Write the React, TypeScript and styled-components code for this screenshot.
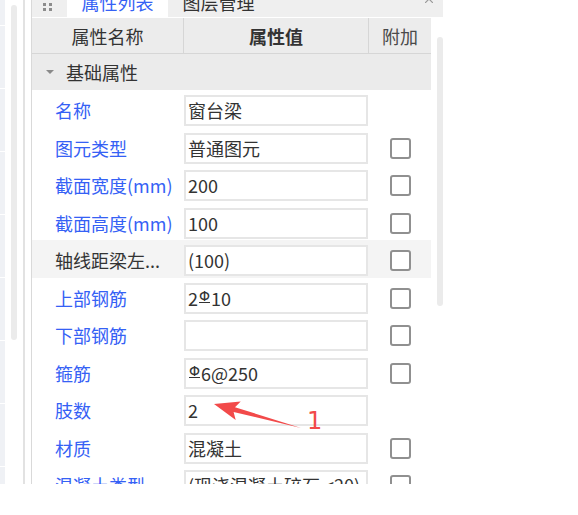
import React from 'react';
import styled, { createGlobalStyle } from 'styled-components';

const GlobalStyle = createGlobalStyle`
  html, body {
    margin: 0;
    padding: 0;
    background: #fff;
  }
  body {
    font-family: "Noto Sans CJK SC", "Noto Sans", sans-serif;
  }
`;

type Row = {
  label: string;
  value: React.ReactNode;
  check?: boolean;
  plain?: boolean;
};

const Rebar = () => <RebarMark>Φ</RebarMark>;

const rows: Row[] = [
  { label: '名称', value: '窗台梁' },
  { label: '图元类型', value: '普通图元', check: true },
  { label: '截面宽度(mm)', value: '200', check: true },
  { label: '截面高度(mm)', value: '100', check: true },
  { label: '轴线距梁左...', value: '(100)', check: true, plain: true },
  {
    label: '上部钢筋',
    value: (
      <>
        2<Rebar />10
      </>
    ),
    check: true,
  },
  { label: '下部钢筋', value: '', check: true },
  {
    label: '箍筋',
    value: (
      <>
        <Rebar />6@250
      </>
    ),
    check: true,
  },
  { label: '肢数', value: '2' },
  { label: '材质', value: '混凝土', check: true },
  { label: '混凝土类型', value: '(现浇混凝土碎石 <20)', check: true },
];

export default function App() {
  return (
    <Page>
      <GlobalStyle />
      <Side>
        <NavStrip>
          {Array.from({ length: 9 }).map((_, i) => (
            <NavItem key={i} />
          ))}
        </NavStrip>
        <SideScroll>
          <Thumb $h={335} />
        </SideScroll>
        <SideEdge />
      </Side>

      <Panel>
        <TabBar>
          <Grip>
            <svg width="10" height="10" viewBox="0 0 10 10">
              <rect x="0" y="0" width="3" height="3" fill="#8c8c8c" />
              <rect x="6" y="0" width="3" height="3" fill="#8c8c8c" />
              <rect x="0" y="5" width="3" height="3" fill="#8c8c8c" />
              <rect x="6" y="5" width="3" height="3" fill="#8c8c8c" />
            </svg>
          </Grip>
          <Tab $active>
            <TabText>属性列表</TabText>
          </Tab>
          <Tab>
            <TabText>图层管理</TabText>
          </Tab>
          <Spacer />
          <Close>
            <svg width="8" height="8" viewBox="0 0 8 8">
              <path d="M0 0 L8 8 M8 0 L0 8" stroke="#9a9a9a" strokeWidth="1.2" />
            </svg>
          </Close>
        </TabBar>

        <Body>
          <Table>
            <HeadRow>
              <HeadCell>属性名称</HeadCell>
              <HeadCell $bold>属性值</HeadCell>
              <HeadCell $muted $last>
                附加
              </HeadCell>
            </HeadRow>
            <GroupRow>
              <Caret />
              基础属性
            </GroupRow>
            {rows.map((r) => (
              <PropRow key={r.label} $shade={r.plain}>
                <Label $plain={r.plain}>{r.label}</Label>
                <ValueCell>
                  <ValueBox>{r.value}</ValueBox>
                </ValueCell>
                <CheckCell>{r.check && <CheckBox />}</CheckCell>
              </PropRow>
            ))}
          </Table>
          <ScrollCol>
            <Thumb $h={269} />
          </ScrollCol>
        </Body>
      </Panel>

      <Arrow width="578" height="515" viewBox="0 0 578 515">
        <polygon
          points="214,404 240.7,401.5 235,407.2 301,428 233.6,412 235.7,419.9"
          fill="#f24a4a"
        />
      </Arrow>
      <Callout>1</Callout>
    </Page>
  );
}

const Page = styled.div`
  position: relative;
  display: flex;
  align-items: flex-start;
  width: 578px;
  height: 515px;
  background: #fff;
  overflow: hidden;
`;

const Side = styled.div`
  display: flex;
  width: 31px;
  height: 484px;
  border-right: 1px solid #d9d9d9;
  overflow: hidden;
`;

const NavStrip = styled.div`
  display: flex;
  flex-direction: column;
  gap: 1px;
  width: 5px;
  margin-top: -37px;
`;

const NavItem = styled.div`
  flex: none;
  height: 62px;
  background: #eff1f5;
`;

const SideScroll = styled.div`
  width: 12px;
  padding: 5px 0 0 6px;
`;

const Thumb = styled.div<{ $h: number }>`
  width: 6px;
  height: ${(p) => p.$h}px;
  border-radius: 3px;
  background: #ebebeb;
`;

const SideEdge = styled.div`
  width: 2px;
  margin-right: 6px;
  background: #e2e2e2;
`;

const Panel = styled.div`
  display: flex;
  flex-direction: column;
  width: 411px;
  height: 484px;
  overflow: hidden;
`;

const TabBar = styled.div`
  display: flex;
  align-items: flex-start;
  height: 17px;
  background: #efefef;
  overflow: hidden;
`;

const Grip = styled.div`
  width: 35px;
  padding: 3px 0 0 11px;
  box-sizing: border-box;

  svg {
    display: block;
  }
`;

const Tab = styled.div<{ $active?: boolean }>`
  width: 101px;
  height: 17px;
  overflow: hidden;
  background: ${(p) => (p.$active ? '#fff' : 'transparent')};
  color: ${(p) => (p.$active ? '#3561f5' : '#333')};
  text-align: center;
  white-space: nowrap;
`;

const TabText = styled.span`
  display: block;
  margin-top: -7px;
  font-size: 18px;
  line-height: 18px;
`;

const Spacer = styled.div`
  flex: 1;
`;

const Close = styled.div`
  margin: -5px 10px 0 0;

  svg {
    display: block;
  }
`;

const Body = styled.div`
  display: flex;
  flex: 1;
  margin-top: 1px;
  min-height: 0;
`;

const Table = styled.div`
  width: 399px;
  font-size: 18px;
`;

const HeadRow = styled.div`
  display: grid;
  grid-template-columns: 152px 185px 62px;
  height: 35px;
  background: #ececec;
  border-bottom: 1px solid #d6d6d6;
`;

const HeadCell = styled.div<{ $bold?: boolean; $muted?: boolean; $last?: boolean }>`
  display: flex;
  align-items: center;
  justify-content: center;
  border-right: ${(p) => (p.$last ? 'none' : '1px solid #d6d6d6')};
  color: ${(p) => (p.$muted ? '#4a4a4a' : '#333')};
  font-weight: ${(p) => (p.$bold ? 700 : 400)};
`;

const GroupRow = styled.div`
  display: flex;
  align-items: center;
  height: 36px;
  padding-left: 14px;
  background: #ebebeb;
  color: #333;
`;

const Caret = styled.span`
  width: 0;
  height: 0;
  margin-right: 12px;
  border-left: 4px solid transparent;
  border-right: 4px solid transparent;
  border-top: 4px solid #8a8a8a;
`;

const PropRow = styled.div<{ $shade?: boolean }>`
  display: grid;
  grid-template-columns: 152px 185px 62px;
  align-items: center;
  height: 37.5px;
  padding-top: 5px;
  padding-bottom: 1.5px;
  box-sizing: border-box;
  background: ${(p) => (p.$shade ? '#f4f4f4' : '#fff')};
`;

const Label = styled.div<{ $plain?: boolean }>`
  padding-left: 23px;
  color: ${(p) => (p.$plain ? '#333' : '#3561f5')};
  line-height: 31px;
  white-space: nowrap;
  overflow: hidden;
`;

const ValueCell = styled.div`
  display: flex;
`;

const ValueBox = styled.div`
  width: 184px;
  height: 31px;
  box-sizing: border-box;
  padding-left: 2px;
  border: 2px solid #e6e6e6;
  background: #fff;
  color: #333;
  line-height: 27px;
  white-space: nowrap;
  overflow: hidden;
`;

const RebarMark = styled.span`
  display: inline-block;
  margin: 0 1px;
  font-family: "DejaVu Sans", sans-serif;
  font-size: 14px;
  line-height: 11px;
  vertical-align: 5px;
  border-bottom: 1.5px solid #333;
`;

const CheckCell = styled.div`
  display: flex;
  justify-content: center;
`;

const CheckBox = styled.div`
  width: 21px;
  height: 21px;
  box-sizing: border-box;
  border: 2px solid #909090;
  border-radius: 3px;
  background: #fff;
`;

const ScrollCol = styled.div`
  width: 12px;
  padding: 19px 0 0 6px;
`;

const Arrow = styled.svg`
  position: absolute;
  left: 0;
  top: 0;
  pointer-events: none;
`;

const Callout = styled.div`
  position: absolute;
  left: 307px;
  top: 409px;
  color: #f24a4a;
  font-family: "DejaVu Sans", sans-serif;
  font-size: 24px;
  line-height: 24px;
`;
